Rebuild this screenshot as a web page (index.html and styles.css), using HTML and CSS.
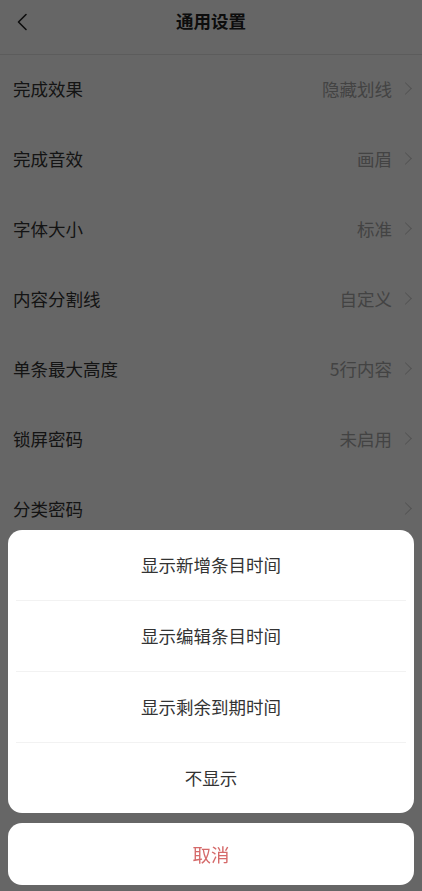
FILE: index.html
```html
<!DOCTYPE html>
<html lang="zh-CN">
<head>
    <meta charset="UTF-8">
    <meta name="viewport" content="width=device-width, initial-scale=1.0">
    <title>通用设置</title>
    <link rel="stylesheet" href="styles.css">
</head>
<body>
    <header class="nav-bar">
        <span class="nav-back">
            <svg width="12" height="18" viewBox="0 0 12 18"><path d="M10 1.5 L2.5 9 L10 16.5" fill="none" stroke="#222" stroke-width="1.6" stroke-linecap="round" stroke-linejoin="round"/></svg>
        </span>
        <h1 class="nav-title">通用设置</h1>
    </header>

    <ul class="setting-list">
        <li class="setting-row"><span class="setting-label">完成效果</span><span class="setting-value">隐藏划线</span><i class="arrow"></i></li>
        <li class="setting-row"><span class="setting-label">完成音效</span><span class="setting-value">画眉</span><i class="arrow"></i></li>
        <li class="setting-row"><span class="setting-label">字体大小</span><span class="setting-value">标准</span><i class="arrow"></i></li>
        <li class="setting-row"><span class="setting-label">内容分割线</span><span class="setting-value">自定义</span><i class="arrow"></i></li>
        <li class="setting-row"><span class="setting-label">单条最大高度</span><span class="setting-value">5行内容</span><i class="arrow"></i></li>
        <li class="setting-row"><span class="setting-label">锁屏密码</span><span class="setting-value">未启用</span><i class="arrow"></i></li>
        <li class="setting-row"><span class="setting-label">分类密码</span><span class="setting-value"></span><i class="arrow"></i></li>
        <li class="setting-row"><span class="setting-label">显示时间</span><span class="setting-value">不显示</span><i class="arrow"></i></li>
        <li class="setting-row"><span class="setting-label">其他设置</span><span class="setting-value"></span><i class="arrow"></i></li>
    </ul>

    <!-- action sheet -->
    <div class="mask">
        <div class="sheet">
            <div class="sheet-group">
                <div class="sheet-item">显示新增条目时间</div>
                <div class="sheet-item">显示编辑条目时间</div>
                <div class="sheet-item">显示剩余到期时间</div>
                <div class="sheet-item">不显示</div>
            </div>
            <div class="sheet-cancel">取消</div>
        </div>
    </div>
</body>
</html>
```

FILE: styles.css
```css
body {
    margin: 0;
    background: #fff;
    font-family: "Noto Sans CJK SC", "Noto Sans", sans-serif;
    color: #333;
    overflow: hidden;
}
.nav-bar {
    position: relative;
    height: 54px;
    border-bottom: 1px solid #e6e6e6;
    text-align: center;
}
.nav-back {
    position: absolute;
    left: 16px;
    top: 12px;
}
.nav-title {
    margin: 0;
    line-height: 42px;
    font-size: 17.5px;
    font-weight: 600;
    color: #222;
}
.setting-list {
    list-style: none;
    margin: 0;
    padding: 0;
}
.setting-row {
    display: flex;
    align-items: center;
    box-sizing: border-box;
    height: 70px;
    padding: 0 10px 3px 13px;
    font-size: 17.5px;
}
.setting-label {
    flex: 1;
    color: #333;
}
.setting-value {
    color: #a8a8a8;
}
.arrow {
    width: 8px;
    height: 8px;
    margin-left: 9px;
    margin-right: 2px;
    border-top: 1.5px solid #cfcfcf;
    border-right: 1.5px solid #cfcfcf;
    transform: rotate(45deg);
}
.mask {
    position: fixed;
    inset: 0;
    background: rgba(0, 0, 0, 0.6);
    display: flex;
    flex-direction: column;
    justify-content: flex-end;
}
.sheet {
    padding: 0 8px 6px;
}
.sheet-group {
    background: #fff;
    border-radius: 14px;
    overflow: hidden;
}
.sheet-item {
    height: 70px;
    line-height: 70px;
    text-align: center;
    font-size: 17.5px;
    color: #333;
    margin: 0 8px;
}
.sheet-item + .sheet-item {
    border-top: 1px solid #f2f2f2;
}
.sheet-cancel {
    margin-top: 10px;
    height: 62px;
    line-height: 62px;
    background: #fff;
    border-radius: 14px;
    text-align: center;
    font-size: 18.5px;
    color: #d56a6a;
}
```
